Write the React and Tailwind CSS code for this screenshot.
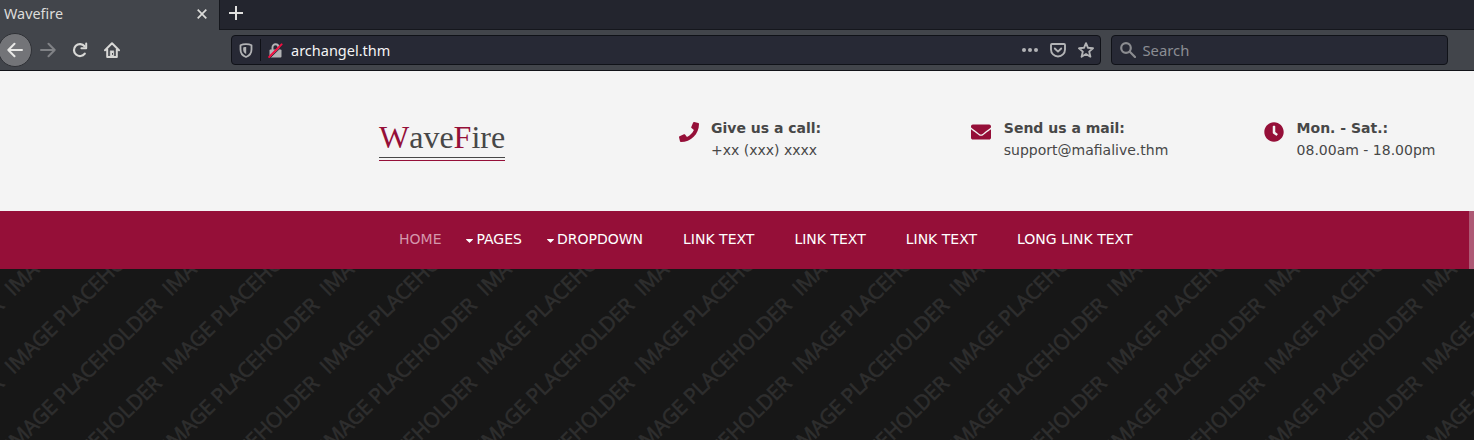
import { FaPhone, FaEnvelope, FaClock } from "react-icons/fa";

function BrowserTabs() {
  return (
    <div className="flex h-[30px] bg-[#23252e]">
      <div className="flex w-[219px] items-center justify-between bg-[#42454b] pl-1 pr-3 text-[#dcdcda]">
        <span className="-mt-[3px] text-[14.4px] leading-5">Wavefire</span>
        <svg className="mt-[-2px] h-[10px] w-[10px]" viewBox="0 0 10 10" fill="none" stroke="currentColor" strokeWidth="1.7">
          <path d="M.7.7l8.6 8.6M9.3.7L.7 9.3" />
        </svg>
      </div>
      <div className="flex flex-1 items-center border-b border-l border-[#15171d] pl-[9px] text-[#e0e0de]">
        <svg className="-mt-1 h-[14px] w-[14px]" viewBox="0 0 14 14" fill="none" stroke="currentColor" strokeWidth="2">
          <path d="M7 0v14M0 7h14" />
        </svg>
      </div>
    </div>
  );
}

function Toolbar() {
  return (
    <div className="flex h-[41px] items-center border-b border-[#111318] bg-[#42454b] text-[#d8d8d6]">
      <div className="-ml-0.5 flex h-[34px] w-[34px] items-center justify-center rounded-full border border-[#2f3136] bg-[#737478]">
        <svg className="h-4 w-4" viewBox="0 0 16 16" fill="none" stroke="#e8e8e6" strokeWidth="2" strokeLinecap="round" strokeLinejoin="round">
          <path d="M15 8H1.3M7.5 1.8L1.3 8l6.2 6.2" />
        </svg>
      </div>
      <svg className="ml-2 h-4 w-4" viewBox="0 0 16 16" fill="none" stroke="#808286" strokeWidth="2" strokeLinecap="round" strokeLinejoin="round">
        <path d="M1 8h13.7M8.5 1.8L14.7 8l-6.2 6.2" />
      </svg>
      <svg className="ml-4 h-4 w-4" viewBox="0 0 16 16" fill="none" stroke="currentColor" strokeWidth="2.2" strokeLinecap="round">
        <path d="M12.8 11.6A6 6 0 1 1 12.6 4.2" />
        <path d="M14.2 1.6V6.2H9.4" strokeWidth="2" strokeLinejoin="round" />
      </svg>
      <svg className="ml-4 h-4 w-4" viewBox="0 0 16 16" fill="none" stroke="currentColor" strokeWidth="2" strokeLinecap="round" strokeLinejoin="round">
        <path d="M1 8.300L8 1.300l7 7M3.200 7.500V15h9.600V7.500" />
        <path d="M6.200 15V8.800h3.600V15z" fill="currentColor" strokeWidth="0.5" />
        <path d="M8.500 11v1.800" stroke="#42454b" strokeWidth="1" strokeLinecap="butt" />
      </svg>

      <div className="ml-[111px] flex h-[30px] w-[870px] items-center rounded border border-[#101218] bg-[#272935] pl-[7px] pr-1.5 text-[#b2b3b5]">
        <svg className="h-[15px] w-[14px]" viewBox="0 0 14 15" fill="none" stroke="currentColor" strokeWidth="1.8" strokeLinejoin="round">
          <path d="M7 1.2C4.800 1.200 3 1.500 1.500 2.200v4.300c0 3.500 2 6.200 5.500 7.500 3.500-1.300 5.500-4 5.500-7.500V2.200C11 1.500 9.200 1.200 7 1.200z" />
          <path d="M7.200 4C6.200 4 5.200 4.100 4.200 4.400V6.500c0 2 1 3.600 3 4.600z" fill="currentColor" stroke="none" />
        </svg>
        <div className="ml-[7px] h-[22px] w-px bg-[#0e1016]" />
        <svg className="ml-[7px] h-[15px] w-[15px]" viewBox="0 0 15 15" fill="none">
          <path d="M4.500 7V4.300a3 3 0 0 1 6 0V7" stroke="#b2b3b5" strokeWidth="1.900" />
          <rect x="1.500" y="6.500" width="12" height="8" rx="1" fill="#b2b3b5" />
          <path d="M1.500 15.500L14.500 2.800" stroke="#272935" strokeWidth="1" />
          <path d="M1.200 14L13.600 1.400" stroke="#f01040" strokeWidth="2" strokeLinecap="round" />
        </svg>
        <span className="ml-2 text-[14.5px] leading-5 text-[#f4f4f4]">archangel.thm</span>
        <svg className="ml-auto h-4 w-4" viewBox="0 0 16 16" fill="currentColor">
          <circle cx="2" cy="8" r="2" />
          <circle cx="8" cy="8" r="2" />
          <circle cx="14" cy="8" r="2" />
        </svg>
        <svg className="ml-3 h-4 w-4" viewBox="0 0 16 16" fill="none" stroke="currentColor" strokeWidth="1.900" strokeLinecap="round" strokeLinejoin="round">
          <path d="M2 2h12a1 1 0 0 1 1 1v4.500a7 7 0 0 1-14 0V3a1 1 0 0 1 1-1z" />
          <path d="M4.800 6.500L8 9.600l3.200-3.100" />
        </svg>
        <svg className="ml-3 h-4 w-4" viewBox="0 0 16 16" fill="none" stroke="currentColor" strokeWidth="1.900" strokeLinejoin="round">
          <path d="M8 1.200l2 4.600 5 .5-3.800 3.300 1.200 5.100L8 12l-4.400 2.700 1.200-5.100L1 6.300l5-.5z" />
        </svg>
      </div>

      <div className="ml-[10px] flex h-[30px] w-[337px] items-center rounded border border-[#101218] bg-[#272935] pl-2 text-[#8b8d93]">
        <svg className="h-4 w-4" viewBox="0 0 16 16" fill="none" stroke="#8b8c90" strokeWidth="2.2" strokeLinecap="round">
          <circle cx="6" cy="6" r="4.8" />
          <path d="M9.8 9.8L15 15" />
        </svg>
        <span className="pl-[6.5px] text-[14.8px] leading-5">Search</span>
      </div>
    </div>
  );
}

function Contact({ icon, title, text }) {
  return (
    <li className="flex w-[292.8px] shrink-0">
      <div className="flex h-[22px] w-[33px] shrink-0 pt-[4.5px] text-[#950f38]">{icon}</div>
      <div className="whitespace-nowrap text-sm leading-[22px]">
        <strong className="block font-bold">{title}</strong>
        <span className="block">{text}</span>
      </div>
    </li>
  );
}

function SiteHeader() {
  return (
    <header className="flex h-[140px] overflow-hidden bg-[#f4f4f4] pl-[379px] text-[#474747]">
      <div className="w-[299px] shrink-0 pt-[47px]">
        <h1 className="flex h-[43px] w-[126px] flex-col border-b border-[#950f38] font-['Liberation_Serif',serif] text-[32px] leading-[38px] [font-kerning:none]">
          <span className="block h-[40px] w-[126px] whitespace-nowrap border-b border-[#474747]">
            <span className="text-[#950f38]">W</span>ave<span className="text-[#950f38]">F</span>ire
          </span>
        </h1>
      </div>
      <ul className="flex pt-[46px] font-['DejaVu_Sans',sans-serif]">
        <Contact icon={<FaPhone className="ml-px h-5 w-5" />} title="Give us a call:" text="+xx (xxx) xxxx" />
        <Contact icon={<FaEnvelope className="h-5 w-5" />} title="Send us a mail:" text="support@mafialive.thm" />
        <Contact icon={<FaClock className="h-5 w-5" />} title="Mon. - Sat.:" text="08.00am - 18.00pm" />
      </ul>
    </header>
  );
}

function Caret() {
  return (
    <svg className="mt-1 mr-[3px] h-1 w-[7px]" viewBox="0 0 7 4" fill="currentColor">
      <path d="M.5 0h6a.4.4 0 0 1 .3.7L3.900 3.600a.6.6 0 0 1-.8 0L.2.700A.4.400 0 0 1 .5 0z" />
    </svg>
  );
}

function SiteNav() {
  return (
    <div className="flex h-[58px] bg-[#950f38]">
      <nav className="flex flex-1 items-center pb-0.5 pl-[399px] font-['DejaVu_Sans',sans-serif] text-sm leading-5 whitespace-nowrap text-white">
        <a className="mr-[25px] text-[#d497ab]">HOME</a>
        <a className="mr-[25px] flex items-center">
          <Caret />PAGES
        </a>
        <a className="mr-10 flex items-center">
          <Caret />DROPDOWN
        </a>
        <a className="mr-10">LINK TEXT</a>
        <a className="mr-10">LINK TEXT</a>
        <a className="mr-10">LINK TEXT</a>
        <a>LONG LINK TEXT</a>
      </nav>
      <div className="w-[5px] bg-[#ad5874]" />
    </div>
  );
}

// Diagonal watermark, repeated every 157.5 by 78 pixels; keep only labels that reach the banner.
const labels = [];
for (let col = -1; col < 10; col++) {
  for (let row = 0; row < 5; row++) {
    const x = 13.5 + col * 157.5;
    const y = 28 + row * 78;
    const hidden = Math.max(0, y - 171);
    if (x + 148 > 0 && x + hidden < 1474 && hidden < 148) labels.push({ x, y });
  }
}

function Hero() {
  return (
    <div className="h-[171px] overflow-hidden bg-[#171717]">
      <svg className="block h-[171px] w-[1474px]" viewBox="0 0 1474 171">
        <g fill="#2e2e2e" stroke="#2e2e2e" strokeWidth="0.6" className="font-['Open_Sans',sans-serif] text-[20.8px]">
          {labels.map(({ x, y }) => (
            <text key={`${x}-${y}`} transform={`translate(${x} ${y}) rotate(-44.4)`} textLength="209">
              IMAGE PLACEHOLDER
            </text>
          ))}
        </g>
      </svg>
    </div>
  );
}

export default function App() {
  return (
    <div className="h-[440px] w-[1474px] overflow-hidden font-['Noto_Sans',sans-serif]">
      <BrowserTabs />
      <Toolbar />
      <SiteHeader />
      <SiteNav />
      <Hero />
    </div>
  );
}
